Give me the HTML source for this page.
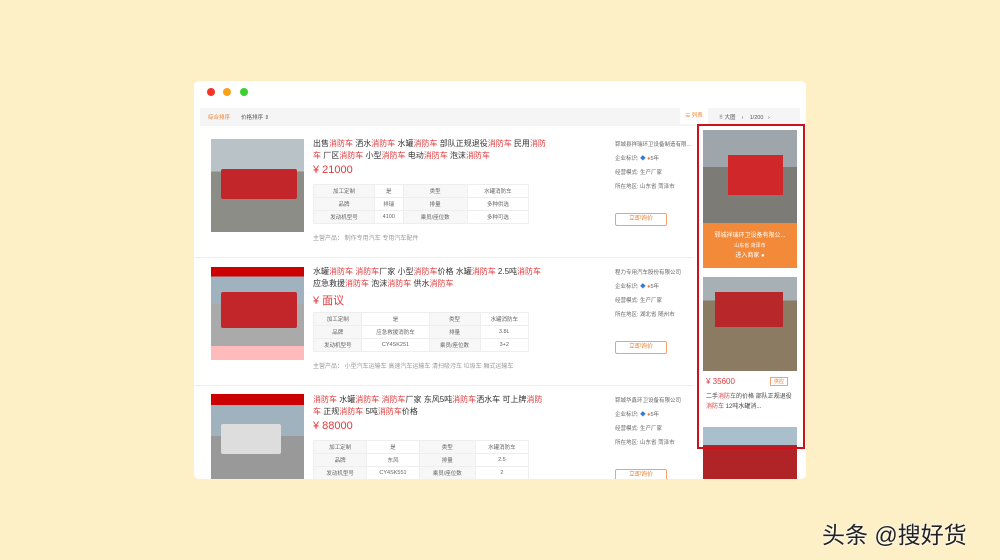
<!DOCTYPE html>
<html><head><meta charset="utf-8"><style>
*{margin:0;padding:0;box-sizing:border-box}
body{width:1000px;height:560px;background:#fdefc6;font-family:"Liberation Sans","Noto Sans CJK SC",sans-serif;position:relative;overflow:hidden;font-size:6px;color:#555}
.win{position:absolute;left:194px;top:81px;width:612px;height:398px;background:#fff;border-radius:5px;overflow:hidden}
.dot{position:absolute;top:7px;width:8px;height:8px;border-radius:50%}
.bar{position:absolute;left:6px;top:27px;width:600px;height:18px;background:#f5f5f5}
.r{color:#e4393c}
.row{position:absolute;left:0;width:500px;border-bottom:1px solid #eee}
.img{position:absolute;left:17px;width:93px;height:93px;background:linear-gradient(#b9c2c6 0 35%,#8d8d88 35% 100%)}
.truck{position:absolute;left:10px;top:30px;width:76px;height:30px;background:#c3262a;border-radius:2px}
.title{position:absolute;left:119px;width:236px;font-size:8px;line-height:12px;color:#333}
.price{position:absolute;left:119px;font-size:11px;color:#e4393c}
table{position:absolute;left:119px;border-collapse:collapse;width:216px}
td{border:1px solid #eee;height:13px;text-align:center;font-size:5.5px;color:#666}
td:nth-child(odd){background:#f7f7f7}
.co{position:absolute;left:421px;width:76px;font-size:5.5px;color:#666;line-height:14px;white-space:nowrap;overflow:hidden}
.btn{position:absolute;left:421px;width:52px;height:13px;border:1px solid #f5a26a;color:#f08030;font-size:6px;text-align:center;line-height:11px;border-radius:2px}
.side{position:absolute;left:503px;top:43px;width:108px;height:325px;border:2px solid #d0101c}
</style></head><body>
<div class="win">
<div class="dot" style="left:13px;background:#f33526"></div>
<div class="dot" style="left:29px;background:#f9a11b"></div>
<div class="dot" style="left:46px;background:#3bd02e"></div>
<div class="bar"></div>
<div style="position:absolute;left:14px;top:32px;color:#f08030;font-size:5.5px">综合排序</div>
<div style="position:absolute;left:47px;top:32px;font-size:5.5px">价格排序 ⇕</div>
<div style="position:absolute;left:486px;top:27px;width:28px;height:16px;background:#fff;color:#f08030;font-size:5.5px;line-height:16px;text-align:center">☰ 列表</div>
<div style="position:absolute;left:525px;top:32px;font-size:5.5px">⠿ 大图 &nbsp;&nbsp; ‹ &nbsp;&nbsp; 1/200 &nbsp; ›</div>

<div class="row" style="top:49px;height:128px">
<div class="img" style="top:9px"><div class="truck"></div></div>
<div class="title" style="top:8px">出售<span class="r">消防车</span> 洒水<span class="r">消防车</span> 水罐<span class="r">消防车</span> 部队正规退役<span class="r">消防车</span> 民用<span class="r">消防车</span> 厂区<span class="r">消防车</span> 小型<span class="r">消防车</span> 电动<span class="r">消防车</span> 泡沫<span class="r">消防车</span></div>
<div class="price" style="top:34px">¥ 21000</div>
<table style="top:54px"><tr><td>加工定制</td><td>是</td><td>类型</td><td>水罐消防车</td></tr><tr><td>品牌</td><td>祥瑞</td><td>排量</td><td>多种供选</td></tr><tr><td>发动机型号</td><td>4100</td><td>乘员/座位数</td><td>多种可选</td></tr></table>
<div style="position:absolute;left:119px;top:103px;color:#999">主营产品： 制作专用汽车 专用汽车配件</div>
<div class="co" style="top:8px">郓城县祥瑞环卫设备制造有限...<br>企业标识: <span style="color:#2b7be0">◆</span> <span style="color:#f08030">●</span>5年<br>经营模式: 生产厂家<br>所在地区: 山东省 菏泽市</div>
<div class="btn" style="top:83px">立即询价</div>
</div>

<div class="row" style="top:177px;height:128px">
<div class="img" style="top:9px;background:linear-gradient(#c00 0 10%,#9fb2bd 10% 40%,#aaa 40% 85%,#fbb 85%)"><div class="truck" style="top:25px;height:36px"></div></div>
<div class="title" style="top:8px">水罐<span class="r">消防车</span> <span class="r">消防车</span>厂家 小型<span class="r">消防车</span>价格 水罐<span class="r">消防车</span> 2.5吨<span class="r">消防车</span> 应急救援<span class="r">消防车</span> 泡沫<span class="r">消防车</span> 供水<span class="r">消防车</span></div>
<div class="price" style="top:34px">¥ 面议</div>
<table style="top:54px"><tr><td>加工定制</td><td>是</td><td>类型</td><td>水罐消防车</td></tr><tr><td>品牌</td><td>应急救援消防车</td><td>排量</td><td>3.8L</td></tr><tr><td>发动机型号</td><td>CY4SK251</td><td>乘员/座位数</td><td>3+2</td></tr></table>
<div style="position:absolute;left:119px;top:103px;color:#999">主营产品： 小型汽车运输车 高速汽车运输车 清扫吸污车 垃圾车 厢式运输车</div>
<div class="co" style="top:8px">程力专用汽车股份有限公司<br>企业标识: <span style="color:#2b7be0">◆</span> <span style="color:#f08030">●</span>5年<br>经营模式: 生产厂家<br>所在地区: 湖北省 随州市</div>
<div class="btn" style="top:83px">立即询价</div>
</div>

<div class="row" style="top:305px;height:128px;border:0">
<div class="img" style="top:8px;background:linear-gradient(#c00 0 12%,#9fb2bd 12% 45%,#999 45%)"><div class="truck" style="top:30px;background:#ddd;width:60px"></div></div>
<div class="title" style="top:8px"><span class="r">消防车</span> 水罐<span class="r">消防车</span> <span class="r">消防车</span>厂家 东风5吨<span class="r">消防车</span>洒水车 可上牌<span class="r">消防车</span> 正规<span class="r">消防车</span> 5吨<span class="r">消防车</span>价格</div>
<div class="price" style="top:34px">¥ 88000</div>
<table style="top:54px"><tr><td>加工定制</td><td>是</td><td>类型</td><td>水罐消防车</td></tr><tr><td>品牌</td><td>东风</td><td>排量</td><td>2.5</td></tr><tr><td>发动机型号</td><td>CY4SK551</td><td>乘员/座位数</td><td>2</td></tr></table>
<div class="co" style="top:8px">郓城华鑫环卫设备有限公司<br>企业标识: <span style="color:#2b7be0">◆</span> <span style="color:#f08030">●</span>5年<br>经营模式: 生产厂家<br>所在地区: 山东省 菏泽市</div>
<div class="btn" style="top:83px">立即询价</div>
</div>

<div style="position:absolute;left:509px;top:49px;width:94px;height:138px;background:#f28a3a">
<div style="height:93px;background:linear-gradient(#9ea6ab 0 40%,#7d7b76 40%)"><div style="position:absolute;left:25px;top:25px;width:55px;height:40px;background:#d0282a"></div></div>
<div style="color:#fff;text-align:center;font-size:6px;line-height:10px;padding-top:8px">郓城祥瑞环卫设备有限公...<br><span style="font-size:5px">山东省 菏泽市</span><br>进入商家 ●</div></div>
<div style="position:absolute;left:509px;top:196px;width:94px;height:94px;background:linear-gradient(#a7b0b5 0 25%,#8a7b62 25%)"><div style="position:absolute;left:12px;top:15px;width:68px;height:35px;background:#b8282a"></div></div>
<div style="position:absolute;left:512px;top:296px;color:#e4393c;font-size:8px">¥ 35600</div>
<div style="position:absolute;left:576px;top:296px;border:1px solid #f5a26a;color:#f08030;font-size:5px;padding:0 3px">供应</div>
<div style="position:absolute;left:512px;top:311px;width:88px;font-size:6px;line-height:10px;color:#444">二手<span class="r">消防车</span>的价格 部队正规退役<span class="r">消防车</span> 12吨水罐消...</div>
<div style="position:absolute;left:509px;top:346px;width:94px;height:60px;background:linear-gradient(#a9c0cc 0 30%,#b02428 30%)"></div>
<div class="side"></div>
</div>
<div style="position:absolute;left:822px;top:516px;font-size:23px;color:#222;text-shadow:0 0 2px #fff,0 0 2px #fff;white-space:nowrap">头条 @搜好货</div>
</body></html>
